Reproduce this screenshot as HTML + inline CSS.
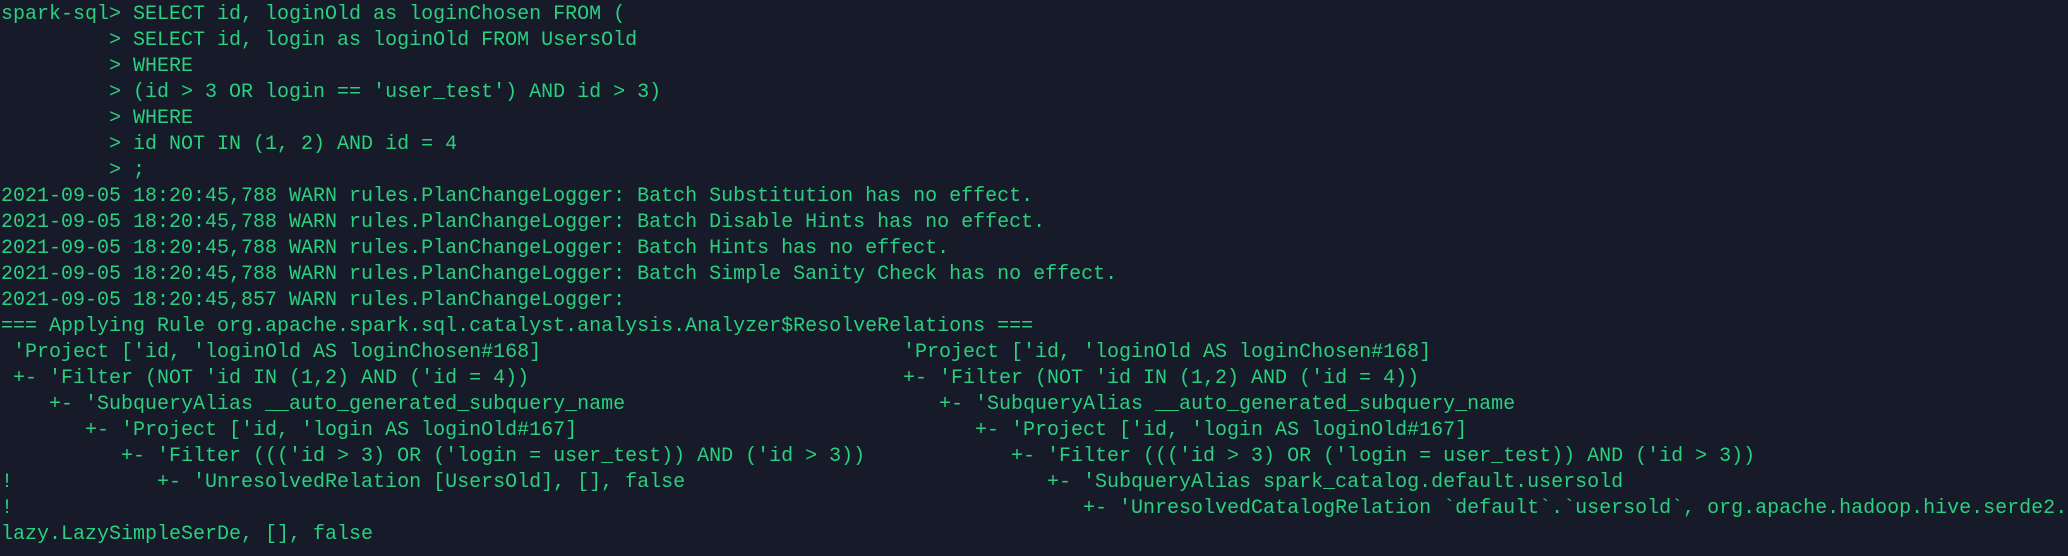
<!DOCTYPE html>
<html><head><meta charset="utf-8"><style>
html,body{margin:0;padding:0;background:#161a29;width:2068px;height:554px;overflow:hidden}
body{font-family:"Liberation Mono",monospace;font-size:20px;line-height:26px;color:#2ad07f;padding-top:2px;padding-left:1px}
.l{position:relative;height:26px;white-space:pre}
.r{position:absolute;left:902px;top:0;white-space:pre}
</style></head><body>
<div class="l">spark-sql&gt; SELECT id, loginOld as loginChosen FROM (</div>
<div class="l">         &gt; SELECT id, login as loginOld FROM UsersOld</div>
<div class="l">         &gt; WHERE</div>
<div class="l">         &gt; (id &gt; 3 OR login == 'user_test') AND id &gt; 3)</div>
<div class="l">         &gt; WHERE</div>
<div class="l">         &gt; id NOT IN (1, 2) AND id = 4</div>
<div class="l">         &gt; ;</div>
<div class="l">2021-09-05 18:20:45,788 WARN rules.PlanChangeLogger: Batch Substitution has no effect.</div>
<div class="l">2021-09-05 18:20:45,788 WARN rules.PlanChangeLogger: Batch Disable Hints has no effect.</div>
<div class="l">2021-09-05 18:20:45,788 WARN rules.PlanChangeLogger: Batch Hints has no effect.</div>
<div class="l">2021-09-05 18:20:45,788 WARN rules.PlanChangeLogger: Batch Simple Sanity Check has no effect.</div>
<div class="l">2021-09-05 18:20:45,857 WARN rules.PlanChangeLogger: </div>
<div class="l">=== Applying Rule org.apache.spark.sql.catalyst.analysis.Analyzer$ResolveRelations ===</div>
<div class="l"> 'Project ['id, 'loginOld AS loginChosen#168]<span class="r">'Project ['id, 'loginOld AS loginChosen#168]</span></div>
<div class="l"> +- 'Filter (NOT 'id IN (1,2) AND ('id = 4))<span class="r">+- 'Filter (NOT 'id IN (1,2) AND ('id = 4))</span></div>
<div class="l">    +- 'SubqueryAlias __auto_generated_subquery_name<span class="r">   +- 'SubqueryAlias __auto_generated_subquery_name</span></div>
<div class="l">       +- 'Project ['id, 'login AS loginOld#167]<span class="r">      +- 'Project ['id, 'login AS loginOld#167]</span></div>
<div class="l">          +- 'Filter ((('id &gt; 3) OR ('login = user_test)) AND ('id &gt; 3))<span class="r">         +- 'Filter ((('id &gt; 3) OR ('login = user_test)) AND ('id &gt; 3))</span></div>
<div class="l">!            +- 'UnresolvedRelation [UsersOld], [], false<span class="r">            +- 'SubqueryAlias spark_catalog.default.usersold</span></div>
<div class="l">!<span class="r">               +- 'UnresolvedCatalogRelation `default`.`usersold`, org.apache.hadoop.hive.serde2.</span></div>
<div class="l">lazy.LazySimpleSerDe, [], false</div>
</body></html>
